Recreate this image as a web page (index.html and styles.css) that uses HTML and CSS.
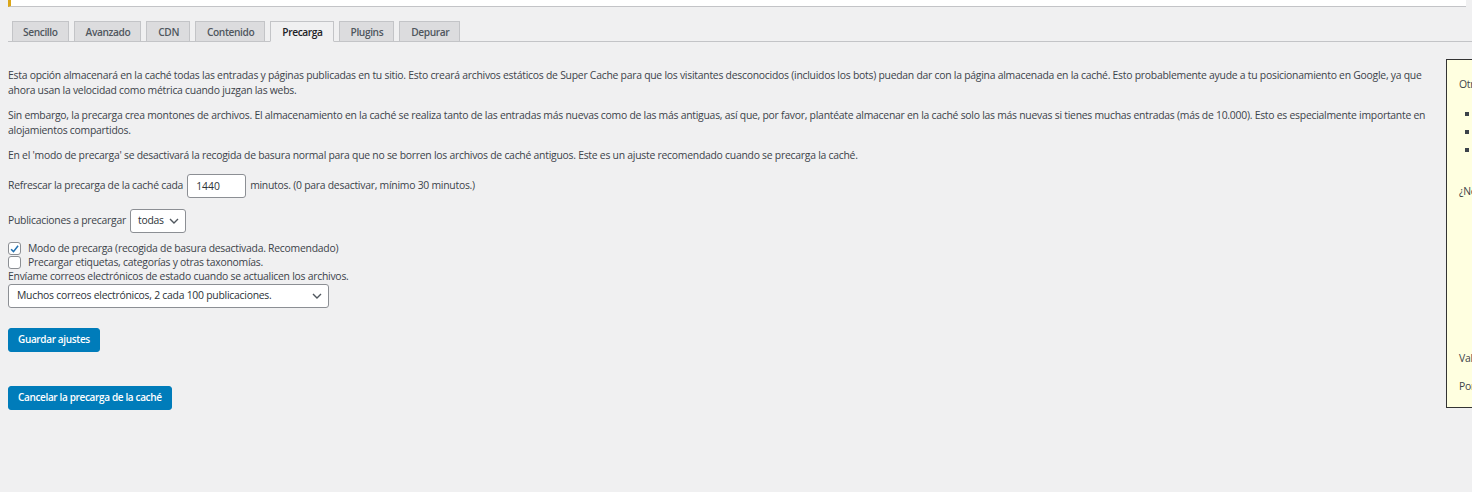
FILE: index.html
```html
<!DOCTYPE html>
<html lang="es">
<head>
<meta charset="utf-8">
<title>WP Super Cache - Precarga</title>
<link rel="stylesheet" href="styles.css">
</head>
<body>
<div class="notice"></div>
<div class="wrap">
  <nav class="tabs">
    <a class="tab">Sencillo</a>
    <a class="tab">Avanzado</a>
    <a class="tab">CDN</a>
    <a class="tab">Contenido</a>
    <a class="tab active">Precarga</a>
    <a class="tab">Plugins</a>
    <a class="tab">Depurar</a>
  </nav>
  <div class="layout">
    <div class="main">
      <p class="para">Esta opción almacenará en la caché todas las entradas y páginas publicadas en tu sitio. Esto creará archivos estáticos de Super Cache para que los visitantes desconocidos (incluidos los bots) puedan dar con la página almacenada en la caché. Esto probablemente ayude a tu posicionamiento en Google, ya que ahora usan la velocidad como métrica cuando juzgan las webs.</p>
      <p class="para">Sin embargo, la precarga crea montones de archivos. El almacenamiento en la caché se realiza tanto de las entradas más nuevas como de las más antiguas, así que, por favor, plantéate almacenar en la caché solo las más nuevas si tienes muchas entradas (más de 10.000). Esto es especialmente importante en alojamientos compartidos.</p>
      <p class="para">En el 'modo de precarga' se desactivará la recogida de basura normal para que no se borren los archivos de caché antiguos. Este es un ajuste recomendado cuando se precarga la caché.</p>
      <div class="row refresh">
        <span>Refrescar la precarga de la caché cada</span>
        <input class="num" type="text" value="1440">
        <span>minutos. (0 para desactivar, mínimo 30 minutos.)</span>
      </div>
      <div class="row posts">
        <span>Publicaciones a precargar</span>
        <div class="select small"><span>todas</span><svg class="chev" viewBox="0 0 10 6" width="10" height="6"><path d="M1 1l4 4 4-4" fill="none" stroke="#50575e" stroke-width="1.4"/></svg></div>
      </div>
      <div class="checks">
        <label class="check"><span class="box checked"><svg viewBox="0 0 12 12" width="12" height="12"><path d="M2.3 6.2l2.6 2.7 5-6.4" fill="none" stroke="#2271b1" stroke-width="1.7"/></svg></span>Modo de precarga (recogida de basura desactivada. Recomendado)</label>
        <label class="check"><span class="box"></span>Precargar etiquetas, categorías y otras taxonomías.</label>
        <div class="email-label">Envíame correos electrónicos de estado cuando se actualicen los archivos.</div>
        <div class="select wide"><span>Muchos correos electrónicos, 2 cada 100 publicaciones.</span><svg class="chev" viewBox="0 0 10 6" width="10" height="6"><path d="M1 1l4 4 4-4" fill="none" stroke="#50575e" stroke-width="1.4"/></svg></div>
      </div>
      <button class="btn save">Guardar ajustes</button>
      <button class="btn cancel">Cancelar la precarga de la caché</button>
    </div>
    <aside class="side">
      <p class="s-intro">Otros plugins</p>
      <ul class="s-list">
        <li>Jetpack</li>
        <li>Akismet</li>
        <li>VaultPress</li>
      </ul>
      <p class="s-q">¿Necesitas ayuda?</p>
      <ol class="s-ol">
        <li class="o1">1</li>
        <li class="o2">2</li>
        <li class="o3">3</li>
        <li class="o4">4</li>
      </ol>
      <p class="s-val">Valora</p>
      <p class="s-por">Por</p>
    </aside>
  </div>
</div>
</body>
</html>
```
FILE: styles.css
```css
html, body {
  margin: 0;
  padding: 0;
}
body {
  background: #f0f0f1;
  color: #3c434a;
  font-family: "Open Sans", "Noto Sans", sans-serif;
  font-size: 10.4px;
  line-height: 14.5px;
  letter-spacing: -0.25px;
  overflow: hidden;
  height: 492px;
  width: 1472px;
}
.notice {
  height: 6px;
  margin: 0 6px 0 8px;
  background: #fff;
  border-left: 3px solid #dba617;
  border-bottom: 1px solid #c3c4c7;
}
.wrap {
  padding-left: 8px;
}
.tabs {
  display: flex;
  gap: 5px;
  margin-top: 14px;
  padding-left: 4px;
  border-bottom: 1px solid #c3c4c7;
  height: 20px;
}
.tab {
  box-sizing: border-box;
  height: 21px;
  padding: 0 10px 0 11px;
  border: 1px solid #c3c4c7;
  background: #dcdcde;
  color: #50575e;
  font-weight: 600;
  font-size: 10.2px;
  letter-spacing: -0.4px;
  line-height: 20px;
  white-space: nowrap;
}
.tab:first-child {
  padding-left: 10px;
}
.tab.active {
  background: #f0f0f1;
  border-bottom-color: #f0f0f1;
  color: #1d2327;
}
.layout {
  display: flex;
  gap: 16px;
  align-items: flex-start;
}
.main {
  width: 1422px;
  flex: none;
  padding-top: 26px;
}
.para {
  margin: 0 0 11px;
}
.row {
  display: flex;
  align-items: center;
  gap: 4px;
}
.refresh {
  margin-top: 6px;
}
.num {
  box-sizing: border-box;
  width: 59px;
  height: 24px;
  border: 1px solid #8c8f94;
  border-radius: 3px;
  background: #fff;
  font: inherit;
  color: #2c3338;
  padding: 0 8px;
  margin: 0;
}
.posts {
  margin-top: 11px;
}
.select {
  box-sizing: border-box;
  display: flex;
  align-items: center;
  justify-content: space-between;
  height: 24px;
  border: 1px solid #8c8f94;
  border-radius: 3px;
  background: #fff;
  color: #2c3338;
  padding: 0 6px 0 7px;
}
.select.small {
  width: 56px;
}
.select.wide {
  width: 321px;
  padding-left: 8px;
  padding-right: 6px;
}
.chev {
  display: block;
}
.checks {
  margin-top: 9px;
}
.check {
  display: flex;
  align-items: center;
  gap: 7px;
  height: 14px;
}
.email-label {
  height: 14px;
  line-height: 13px;
}
.box {
  box-sizing: border-box;
  width: 13px;
  height: 13px;
  border: 1px solid #8c8f94;
  border-radius: 3px;
  background: #fff;
  display: flex;
  align-items: center;
  justify-content: center;
  flex: none;
}
.btn {
  display: block;
  border: 1px solid #007cba;
  background: #007cba;
  color: #fff;
  font: inherit;
  font-weight: 600;
  font-size: 10px;
  letter-spacing: -0.35px;
  height: 24px;
  padding: 0 9px;
  border-radius: 3px;
}
.save {
  margin-top: 20px;
}
.cancel {
  margin-top: 34px;
}
.side {
  box-sizing: border-box;
  flex: none;
  width: 300px;
  height: 349px;
  margin-top: 17px;
  background: #ffffe0;
  border: 1px solid #333;
  padding: 17px 0 0 12px;
  color: #3c434a;
}
.s-intro {
  margin: 0 0 12px;
}
.s-list {
  list-style: square;
  margin: 0;
  padding-left: 20px;
}
.s-list li {
  line-height: 18.3px;
}
.s-q {
  margin: 26px 0 14px;
}
.s-ol {
  list-style: none;
  margin: 0;
  padding-left: 23px;
}
.s-ol .o1 { margin-bottom: 18px; }
.s-ol .o2 { margin-bottom: 18px; }
.s-ol .o3 { margin-bottom: 3px; }
.s-val {
  margin: 41px 0 14px;
}
.s-por {
  margin: 0;
}
```
